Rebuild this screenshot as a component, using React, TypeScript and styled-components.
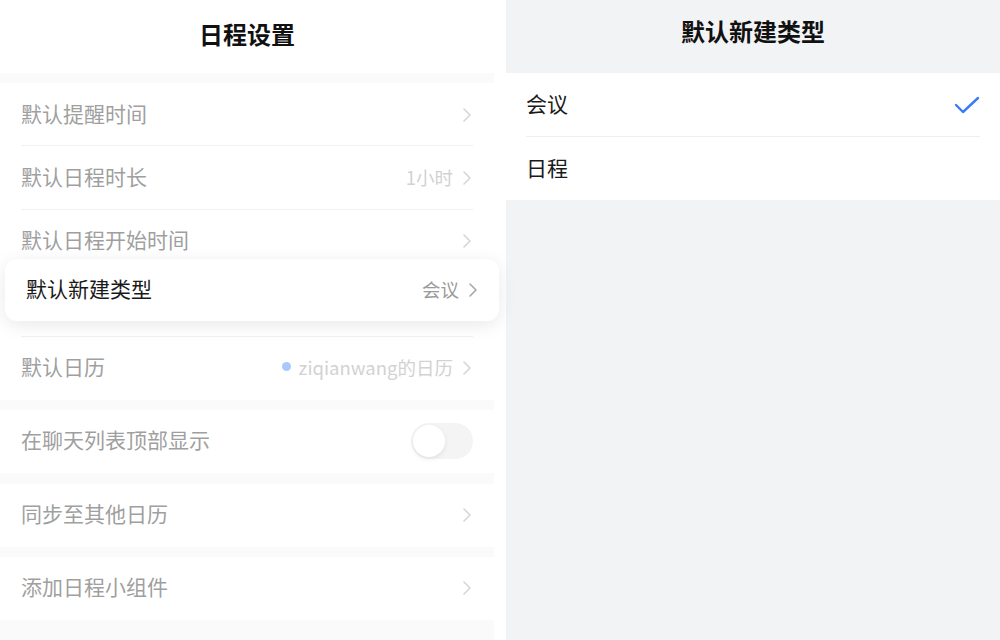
import styled, { createGlobalStyle } from "styled-components";

const GlobalStyle = createGlobalStyle`
    html, body {
        margin: 0;
        padding: 0;
        background: #fff;
    }
    body {
        font-family: "Noto Sans CJK SC", "Noto Sans", sans-serif;
    }
`;

const Page = styled.div`
    width: 1000px;
    height: 640px;
    display: flex;
    gap: 12px;
    background: #fff;
    overflow: hidden;
`;

const SettingsPane = styled.div`
    position: relative;
    width: 494px;
    display: flex;
    flex-direction: column;
    background: #fafafa;
`;

const TypePane = styled.div`
    flex: 1;
    display: flex;
    flex-direction: column;
    background: #f2f3f5;
`;

const Header = styled.div<{ $bg: string; $lift: number }>`
    height: 73px;
    display: flex;
    align-items: center;
    justify-content: center;
    background: ${(p) => p.$bg};
    font-size: 24px;
    font-weight: 700;
    color: #111;
    padding-bottom: ${(p) => p.$lift}px;
    box-sizing: border-box;
`;

const Group = styled.div<{ $gap: number }>`
    margin-top: ${(p) => p.$gap}px;
    background: #fff;
`;

const Row = styled.div<{ $h: number; $divider?: boolean }>`
    position: relative;
    height: ${(p) => p.$h}px;
    display: flex;
    align-items: center;
    padding: 0 21px;
    gap: 8px;

    &::after {
        content: "";
        display: ${(p) => (p.$divider ? "block" : "none")};
        position: absolute;
        left: 21px;
        right: 21px;
        bottom: 0;
        height: 1px;
        background: #f1f1f1;
    }
`;

const Label = styled.span<{ $dark?: boolean }>`
    flex: 1;
    font-size: 21px;
    padding-bottom: 4px;
    color: ${(p) => (p.$dark ? "#1a1a1a" : "#9f9f9f")};
    white-space: nowrap;
`;

const Value = styled.span<{ $dark?: boolean }>`
    display: flex;
    align-items: center;
    gap: 8px;
    font-size: 18.5px;
    padding-bottom: 3px;
    color: ${(p) => (p.$dark ? "#9a9a9a" : "#d2d2d2")};
    white-space: nowrap;
`;

const Dot = styled.span`
    width: 9px;
    height: 9px;
    border-radius: 50%;
    background: #a9c9fb;
`;

const Chevron = ({ color }: { color: string }) => (
    <svg width="12" height="16" viewBox="0 0 12 16" fill="none">
        <path d="M3 2l6 6-6 6" stroke={color} strokeWidth="1.6" strokeLinecap="round" strokeLinejoin="round" />
    </svg>
);

const Toggle = styled.div`
    position: relative;
    width: 62px;
    height: 36px;
    border-radius: 18px;
    background: #f4f4f4;

    &::before {
        content: "";
        position: absolute;
        left: 2px;
        top: 2px;
        width: 32px;
        height: 32px;
        border-radius: 50%;
        background: #fff;
        box-shadow: 0 2px 5px rgba(0, 0, 0, 0.08);
    }
`;

const FloatingCard = styled.div`
    position: absolute;
    left: 5px;
    top: 259px;
    width: 494px;
    height: 62px;
    box-sizing: border-box;
    display: flex;
    align-items: center;
    gap: 8px;
    padding: 0 20px 0 21px;
    background: #fff;
    border-radius: 12px;
    box-shadow: 0 4px 18px rgba(0, 0, 0, 0.09);
`;

const BottomFill = styled.div`
    flex: 1;
`;

const OptionList = styled.div`
    background: #fff;
`;

const Option = styled.div<{ $h: number; $divider?: boolean }>`
    position: relative;
    height: ${(p) => p.$h}px;
    display: flex;
    align-items: center;
    padding: 0 20px;
    font-size: 21px;
    color: #1a1a1a;

    span {
        flex: 1;
        padding-bottom: 4px;
    }

    &::after {
        content: "";
        display: ${(p) => (p.$divider ? "block" : "none")};
        position: absolute;
        left: 20px;
        right: 20px;
        bottom: 0;
        height: 1px;
        background: #eeeeee;
    }
`;

const Check = () => (
    <svg width="26" height="18" viewBox="0 0 26 18" fill="none">
        <path d="M2 9l7 7L24 2" stroke="#3a7cf5" strokeWidth="2.4" strokeLinecap="round" strokeLinejoin="round" />
    </svg>
);

export default function App() {
    const faint = "#d6d6d6";

    return (
        <>
            <GlobalStyle />
            <Page>
                <SettingsPane>
                    <Header $bg="#fff" $lift={7}>日程设置</Header>
                    <Group $gap={10}>
                        <Row $h={63.4} $divider>
                            <Label>默认提醒时间</Label>
                            <Chevron color={faint} />
                        </Row>
                        <Row $h={63.4} $divider>
                            <Label>默认日程时长</Label>
                            <Value>1小时</Value>
                            <Chevron color={faint} />
                        </Row>
                        <Row $h={63.4}>
                            <Label>默认日程开始时间</Label>
                            <Chevron color={faint} />
                        </Row>
                        <Row $h={63.4} $divider />
                        <Row $h={63.4}>
                            <Label>默认日历</Label>
                            <Value>
                                <Dot />
                                ziqianwang的日历
                            </Value>
                            <Chevron color={faint} />
                        </Row>
                    </Group>
                    <Group $gap={10}>
                        <Row $h={63}>
                            <Label>在聊天列表顶部显示</Label>
                            <Toggle />
                        </Row>
                    </Group>
                    <Group $gap={11}>
                        <Row $h={63}>
                            <Label>同步至其他日历</Label>
                            <Chevron color={faint} />
                        </Row>
                    </Group>
                    <Group $gap={10}>
                        <Row $h={63}>
                            <Label>添加日程小组件</Label>
                            <Chevron color={faint} />
                        </Row>
                    </Group>
                    <BottomFill />

                    <FloatingCard>
                        <Label $dark>默认新建类型</Label>
                        <Value $dark>会议</Value>
                        <Chevron color="#a8a8a8" />
                    </FloatingCard>
                </SettingsPane>

                <TypePane>
                    <Header $bg="#f2f3f5" $lift={13}>默认新建类型</Header>
                    <OptionList>
                        <Option $h={64} $divider>
                            <span>会议</span>
                            <Check />
                        </Option>
                        <Option $h={63}>
                            <span>日程</span>
                        </Option>
                    </OptionList>
                </TypePane>
            </Page>
        </>
    );
}
